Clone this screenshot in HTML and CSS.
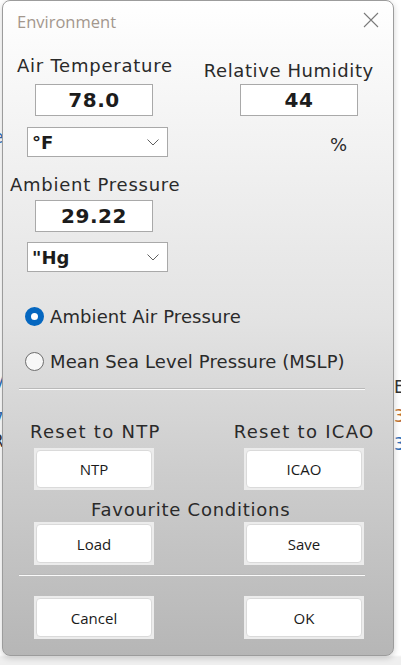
FILE: index.html
```html
<!DOCTYPE html>
<html>
<head>
<meta charset="utf-8">
<link rel="stylesheet" href="styles.css">
</head>
<body>
<div class="desktop">
  <div class="bgwin" aria-hidden="true">
    <span class="g g-e">e</span>
    <span class="g g-v">V</span>
    <span class="g g-7">7</span>
    <span class="g g-r">R</span>
    <span class="g g-E">E</span>
    <span class="g g-3a">3</span>
    <span class="g g-3b">3</span>
  </div>
  <div class="dialog">
    <div class="titlebar">
      <span class="title">Environment</span>
      <svg class="close" width="16" height="16" viewBox="0 0 16 16"><path d="M1 1 L15 15 M15 1 L1 15" stroke="#7a7a7a" stroke-width="1.1" fill="none"/></svg>
    </div>

    <div class="row labels">
      <div class="lbl lbl-air">Air Temperature</div>
      <div class="lbl lbl-rh">Relative Humidity</div>
    </div>

    <div class="row boxes">
      <div class="field f-left">78.0</div>
      <div class="field f-right">44</div>
    </div>

    <div class="row combos">
      <div class="combo"><span>°F</span><svg class="chev" width="12" height="7" viewBox="0 0 12 7"><path d="M0.5 0.5 L6 6 L11.5 0.5" stroke="#606060" stroke-width="1" fill="none"/></svg></div>
      <div class="pct">%</div>
    </div>

    <div class="lbl lbl-amb">Ambient Pressure</div>
    <div class="field f-left f-press">29.22</div>
    <div class="combo combo-hg"><span>"Hg</span><svg class="chev" width="12" height="7" viewBox="0 0 12 7"><path d="M0.5 0.5 L6 6 L11.5 0.5" stroke="#606060" stroke-width="1" fill="none"/></svg></div>

    <div class="radio r1"><span class="dot on"></span><span>Ambient Air Pressure</span></div>
    <div class="radio r2"><span class="dot"></span><span>Mean Sea Level Pressure (MSLP)</span></div>

    <div class="sep sep1"></div>

    <div class="row resetlabels">
      <div class="lbl lbl-ntp">Reset to NTP</div>
      <div class="lbl lbl-icao">Reset to ICAO</div>
    </div>
    <div class="row btnrow btn-reset">
      <div class="btn"><span>NTP</span></div>
      <div class="btn"><span>ICAO</span></div>
    </div>
    <div class="lbl lbl-fav">Favourite Conditions</div>
    <div class="row btnrow btn-fav">
      <div class="btn"><span>Load</span></div>
      <div class="btn"><span>Save</span></div>
    </div>

    <div class="sep sep2"></div>

    <div class="row btnrow btn-final">
      <div class="btn"><span>Cancel</span></div>
      <div class="btn"><span>OK</span></div>
    </div>
  </div>
</div>
</body>
</html>
```

FILE: styles.css
```css
* { box-sizing: border-box; }
html, body { margin: 0; padding: 0; }
body {
  width: 401px;
  height: 665px;
  background: #ffffff;
  overflow: hidden;
  font-family: "DejaVu Sans", sans-serif;
  color: #262626;
}
.desktop {
  position: relative;
  width: 401px;
  height: 665px;
  padding-left: 2px;
  background: linear-gradient(#ffffff 0, #ffffff 655px, #efefef 657px);
}

/* window behind the dialog: only its edges peek out */
.bgwin {
  position: absolute;
  inset: 0;
  font-family: "DejaVu Sans", sans-serif;
  font-size: 17px;
  line-height: 20px;
}
.g { position: absolute; }
.g-e { left: -7px; top: 127px; color: #2f6fb8; }
.g-v { left: -7px; top: 372px; color: #2f6fb8; }
.g-7 { left: -7px; top: 409px; color: #2f6fb8; }
.g-r { left: -8px; top: 431px; color: #333333; }
.g-E { left: 394px; top: 377px; color: #333333; }
.g-3a { left: 394px; top: 406px; color: #c07030; }
.g-3b { left: 394px; top: 434px; color: #2f6fb8; }

.dialog {
  position: relative;
  z-index: 1;
  width: 392px;
  height: 656px;
  border: 1px solid #9c9c9c;
  border-radius: 8px;
  background: linear-gradient(#ffffff 0px, #fbfbfb 40px, #e3e3e3 316px, #cdcdcd 470px, #b6b6b6 656px);
  box-shadow: 0 2px 6px rgba(0,0,0,0.18);
  display: flex;
  flex-direction: column;
  overflow: hidden;
}
.titlebar {
  height: 39px;
  display: flex;
  align-items: center;
  justify-content: space-between;
  padding-left: 14px;
  padding-right: 14px;
}
.title {
  font-family: "Open Sans", "Noto Sans", sans-serif;
  font-size: 16.5px;
  color: #a3978d;
  margin-top: 1px;
}
.close { margin-top: -1px; }

.row { display: flex; }
.lbl {
  font-size: 18px;
  line-height: 20px;
  letter-spacing: 0.75px;
  white-space: nowrap;
  color: #2a2a2a;
}
.labels { height: 44px; }
.lbl-air { margin-left: 14px; margin-top: 16px; }
.lbl-rh { margin-left: 31px; margin-top: 21px; letter-spacing: 0.6px; }

.field {
  width: 118px;
  height: 32px;
  border: 1.5px solid #a9a9a9;
  background: #ffffff;
  font-weight: bold;
  font-size: 20px;
  letter-spacing: 0.5px;
  display: flex;
  align-items: center;
  justify-content: center;
  color: #1c1c1c;
}
.f-left { margin-left: 32px; }
.f-right { margin-left: 87px; }

.combos { margin-top: 11px; height: 30px; }
.combo {
  width: 141px;
  height: 30px;
  margin-left: 24px;
  border: 1.5px solid #a9a9a9;
  background: #ffffff;
  display: flex;
  align-items: center;
  justify-content: space-between;
  padding-left: 4px;
  padding-right: 8px;
  font-weight: bold;
  font-size: 18px;
  color: #1c1c1c;
}
.chev { margin-top: 1px; }
.pct {
  margin-left: 162px;
  margin-top: 8px;
  font-size: 18px;
  line-height: 20px;
  color: #2a2a2a;
}

.lbl-amb { margin-left: 7px; margin-top: 18px; }
.f-press { margin-top: 5px; flex: none; }
.combo-hg { margin-top: 10px; flex: none; }

.radio {
  display: flex;
  align-items: center;
  height: 24px;
  margin-left: 22px;
  font-size: 18px;
  letter-spacing: 0.1px;
  color: #2a2a2a;
  white-space: nowrap;
}
.r1 { margin-top: 32px; }
.r2 { margin-top: 21px; }
.dot {
  width: 19px;
  height: 19px;
  border-radius: 50%;
  border: 1px solid #6e6e6e;
  background: #f7f7f7;
  margin-right: 6px;
  flex: none;
}
.dot.on {
  border: 6px solid #0567c0;
  background: #ffffff;
}

.sep {
  margin-left: 16px;
  width: 346px;
  height: 2px;
  border-top: 1px solid #b9b9b9;
  border-bottom: 1px solid #fafafa;
  flex: none;
}
.sep1 { margin-top: 15px; }
.sep2 { margin-top: 9px; }

.resetlabels { margin-top: 32px; height: 20px; }
.resetlabels .lbl { letter-spacing: 1.3px; }
.lbl-ntp { margin-left: 27px; }
.lbl-icao { margin-left: 73px; }

.btnrow { flex: none; }
.btn {
  width: 120px;
  height: 42px;
  border: 2px solid #ececec;
  background: #ececec;
  flex: none;
}
.btn span {
  display: flex;
  align-items: center;
  justify-content: center;
  width: 100%;
  height: 100%;
  background: #ffffff;
  border: 1px solid #dadada;
  border-radius: 4px;
  font-family: "Open Sans", "Noto Sans", sans-serif;
  font-size: 15px;
  color: #1a1a1a;
}
.btnrow .btn:first-child { margin-left: 31px; }
.btnrow .btn:last-child { margin-left: 90px; }
.btn-reset { margin-top: 6px; }
.lbl-fav { margin-left: 88px; margin-top: 10px; }
.btn-fav { margin-top: 2px; height: 43px; }
.btn-fav .btn { height: 43px; }
.btn-final { margin-top: 20px; }
.btn-final .btn { height: 43px; }
```
